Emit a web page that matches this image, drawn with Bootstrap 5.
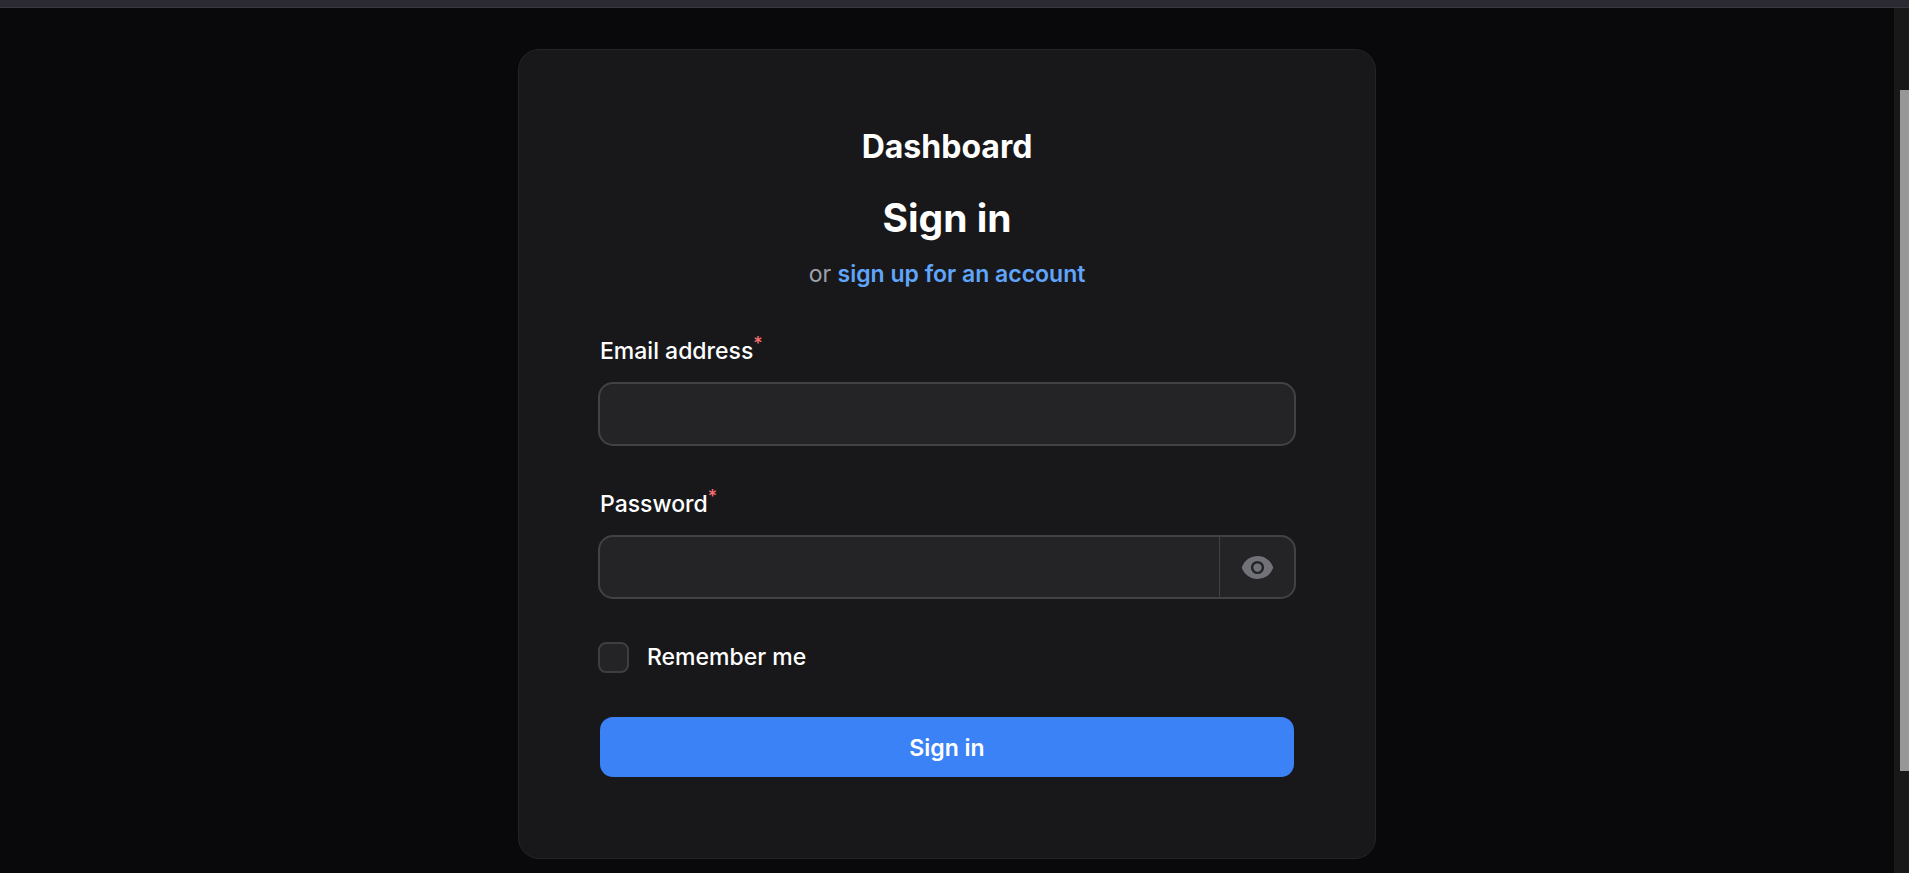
<!DOCTYPE html>
<html lang="en">
<head>
<meta charset="utf-8">
<meta name="viewport" content="width=device-width, initial-scale=1">
<title>Sign in</title>
<link href="https://cdn.jsdelivr.net/npm/bootstrap@5.3.0/dist/css/bootstrap.min.css" rel="stylesheet">
<style>
  body { background: #09090b; color: #fff; font-family: Inter, sans-serif; font-size: 23px; line-height: 34px; }
  .top-strip { height: 8px; background: #2b2a33; border-bottom: 1px solid #38383d; }
  .auth-area { padding: 41px 16px 14px; }
  .auth-card { max-width: 858px; background: #18181b; border: 1px solid #242427; border-radius: 21px; padding: 80px 79px 81px; }
  .brand { font-size: 32px; line-height: 34px; font-weight: 700; margin-bottom: 27px; }
  .auth-title { font-size: 39px; line-height: 54px; font-weight: 700; margin-bottom: 12px; }
  .auth-note { color: #a1a1aa; margin-bottom: 40px; }
  .auth-note a { color: #60a5fa; font-weight: 600; }
  .field-label { line-height: 40px; font-weight: 500; margin: 0 2px 11px; }
  .field-label sup { color: #f87171; font-size: 18px; font-weight: 500; line-height: 0; }
  .field { height: 64px; background: #242427; border: 2px solid #424245; border-radius: 15px; overflow: hidden; margin-bottom: 38px; }
  .field .form-control, .field .form-control:focus { background: transparent; color: #fff; border: 0; border-radius: 0; box-shadow: none; padding: 0 20px; font-size: 23px; }
  .field:focus-within { border-color: #3b82f6; }
  .reveal { width: 75px; border: 0; border-left: 1px solid #424245; background: transparent; color: #71717a; }
  .remember { gap: 18px; line-height: 40px; font-weight: 500; margin-bottom: 40px; }
  .remember .form-check-input { width: 31px; height: 31px; margin: 0; background-color: #242427; border: 2px solid #3e3e41; border-radius: 8px; }
  .submit-row { padding: 0 2px; }
  .btn-signin, .btn-signin:hover { height: 60px; background: #3b82f6; color: #fff; border: 0; border-radius: 13px; font-size: 23px; font-weight: 600; line-height: 34px; padding: 8px 16px 6px; }
  .scroll-track { width: 15px; background: #181818; padding: 82px 0 102px 6px; }
  .scroll-thumb { background: #979797; }
</style>
</head>
<body class="d-flex flex-column min-vh-100">
  <div class="top-strip flex-shrink-0"></div>
  <div class="d-flex flex-grow-1">
    <main class="auth-area flex-grow-1">
      <section class="auth-card mx-auto">
        <header class="text-center">
          <div class="brand">Dashboard</div>
          <h1 class="auth-title">Sign in</h1>
          <p class="auth-note">or <a href="#" class="text-decoration-none">sign up for an account</a></p>
        </header>
        <form>
          <label class="field-label d-block" for="email">Email address<sup>*</sup></label>
          <div class="field d-flex">
            <input class="form-control" type="email" id="email" required>
          </div>
          <label class="field-label d-block" for="password">Password<sup>*</sup></label>
          <div class="field d-flex">
            <input class="form-control" type="password" id="password" required>
            <button class="reveal flex-shrink-0 p-0 d-flex align-items-center justify-content-center" type="button" aria-label="Show password">
              <svg width="33" height="33" viewBox="0 0 20 20" fill="currentColor" aria-hidden="true">
                <path d="M10 12.5a2.5 2.5 0 1 0 0-5 2.5 2.5 0 0 0 0 5Z"/>
                <path fill-rule="evenodd" clip-rule="evenodd" d="M.664 10.59a1.651 1.651 0 0 1 0-1.186A10.004 10.004 0 0 1 10 3c4.257 0 7.893 2.66 9.336 6.41.147.381.146.804 0 1.186A10.004 10.004 0 0 1 10 17c-4.257 0-7.893-2.66-9.336-6.41ZM14 10a4 4 0 1 1-8 0 4 4 0 0 1 8 0Z"/>
              </svg>
            </button>
          </div>
          <div class="remember d-flex align-items-center">
            <input class="form-check-input flex-shrink-0" type="checkbox" id="remember">
            <label for="remember">Remember me</label>
          </div>
          <div class="submit-row">
            <button class="btn btn-signin w-100" type="submit">Sign in</button>
          </div>
        </form>
      </section>
    </main>
    <div class="scroll-track d-flex flex-shrink-0" aria-hidden="true">
      <div class="scroll-thumb flex-grow-1"></div>
    </div>
  </div>
<script src="https://cdn.jsdelivr.net/npm/bootstrap@5.3.0/dist/js/bootstrap.bundle.min.js"></script>
</body>
</html>
